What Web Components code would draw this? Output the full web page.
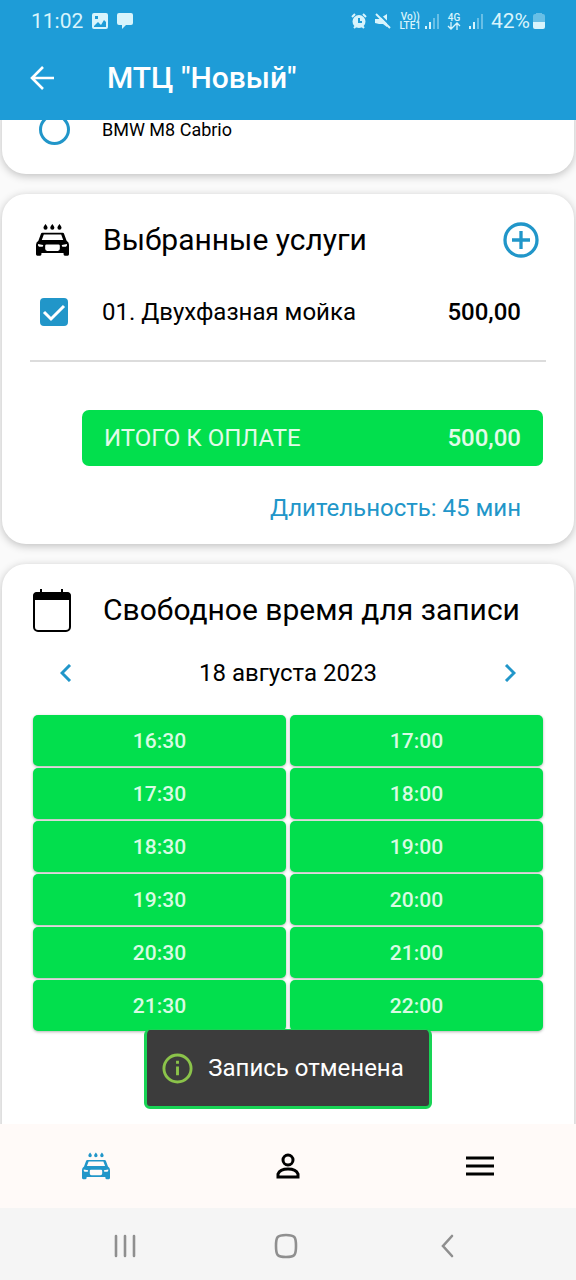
<!DOCTYPE html>
<html lang="ru">
<head>
<meta charset="utf-8">
<meta name="viewport" content="width=device-width, initial-scale=1">
<title>МТЦ "Новый"</title>
<style>
  html, body {
    margin: 0;
    height: 100%;
  }
  body {
    --blue: #1e9cd7;
    --accent: #2196c9;
    --green: #02df4d;
    font-family: Roboto, "Liberation Sans", sans-serif;
    font-size: 24px;
    color: #000;
    background: #fafafa;
  }
</style>
</head>
<body>
<booking-app>
  <status-bar slot="top" time="11:02" battery="42%"></status-bar>
  <title-bar slot="top">МТЦ "Новый"</title-bar>

  <app-card class="vehicles" scrolled>
    <option-row type="radio" small>BMW M8 Cabrio</option-row>
  </app-card>

  <app-card icon="car" heading="Выбранные услуги" action="Добавить услугу">
    <option-row type="checkbox" checked price="500,00">01. Двухфазная мойка</option-row>
    <order-total amount="500,00" duration="Длительность: 45 мин">ИТОГО К ОПЛАТЕ</order-total>
  </app-card>

  <app-card icon="calendar" heading="Свободное время для записи">
    <time-slots date="18 августа 2023"
      times="16:30 17:00 17:30 18:00 18:30 19:00 19:30 20:00 20:30 21:00 21:30 22:00"></time-slots>
  </app-card>

  <toast-message slot="toast">Запись отменена</toast-message>
  <tab-bar slot="bottom"></tab-bar>
  <system-nav slot="bottom"></system-nav>
</booking-app>

<script>
const ICONS = {
  car: ['0 0 97 94', `<g fill="currentColor">
    <path d="M28 0c4 5 6 8 6 11a6 6 0 0 1-12 0c0-3 2-6 6-11zM48 0c4 5 6 8 6 11a6 6 0 0 1-12 0c0-3 2-6 6-11zM69 0c4 5 6 8 6 11a6 6 0 0 1-12 0c0-3 2-6 6-11z"/>
    <path fill-rule="evenodd" d="M19 26h59q4 0 5 4l7 19q7 5 7 12v28q0 4-4 4h-8q-4 0-4-4v-4H16v4q0 4-4 4H4q-4 0-4-4V61q0-7 7-12l7-19q1-4 5-4zM23 31h51l6 16H17zM6 59l15 3q1 4-2 5H9q-4-2-3-8zM91 59l-15 3q-1 4 2 5h10q4-2 3-8zM31 60h35q4 0 4 4v9q0 6-6 6H33q-6 0-6-6v-9q0-4 4-4z"/></g>`],
  calendar: ['0 0 38 43', `<rect x="1" y="4" width="36" height="38" rx="4" fill="none" stroke="currentColor" stroke-width="2"/><path fill="currentColor" d="M0 11V7q0-4 4-4h3V0h2v3h19V0h2v3h4q4 0 4 4v4z"/>`],
  plus: ['0 0 36 36', `<g fill="none" stroke="currentColor" stroke-width="3.300"><circle cx="18" cy="18" r="16"/><path d="M18 9v18M9 18h18"/></g>`],
  back: ['0 0 24 24', `<path fill="none" stroke="currentColor" stroke-width="2.600" d="M13 1 2 12l11 11M2 12h22"/>`],
  left: ['0 0 12 18', `<path fill="none" stroke="currentColor" stroke-width="3" d="M10 1 2 9l8 8"/>`],
  right: ['0 0 12 18', `<path fill="none" stroke="currentColor" stroke-width="3" d="m2 1 8 8-8 8"/>`],
  check: ['0 0 28 28', `<path fill="none" stroke="currentColor" stroke-width="3" d="m4 14 7 7L24 8"/>`],
  info: ['0 0 32 32', `<g fill="none" stroke="currentColor" stroke-width="3"><circle cx="16" cy="16" r="14"/><path d="M16 14v9M16 8v3"/></g>`],
  person: ['0 0 24 26', `<g fill="none" stroke="currentColor" stroke-width="3"><circle cx="12" cy="7" r="5"/><path d="M2 24v-3q2-5 10-5t10 5v3z"/></g>`],
  menu: ['0 0 28 20', `<path fill="none" stroke="currentColor" stroke-width="3" d="M0 2h28M0 10h28M0 18h28"/>`],
  recents: ['0 0 22 24', `<path fill="none" stroke="currentColor" stroke-width="2.600" stroke-linecap="round" d="M2 2v20M11 2v20M20 2v20"/>`],
  home: ['0 0 26 26', `<path fill="none" stroke="currentColor" stroke-width="2.600" d="M13 2c9 0 10 2 10 11s-1 11-10 11S3 22 3 13 4 2 13 2z"/>`],
  sysback: ['0 0 14 24', `<path fill="none" stroke="currentColor" stroke-width="2.600" stroke-linecap="round" d="M12 2 3 12l9 10"/>`],
  photo: ['0 0 16 16', `<path fill="currentColor" fill-rule="evenodd" d="M2 0h12q2 0 2 2v12q0 2-2 2H2q-2 0-2-2V2q0-2 2-2zM2 13l4-4 3 3 3-5 2 2v5H2zM3 3h3v3H3z"/>`],
  chat: ['0 0 16 16', `<path fill="currentColor" d="M2 0h12q2 0 2 2v8q0 2-2 2H9l-4 4v-4H2q-2 0-2-2V2q0-2 2-2z"/>`],
  alarm: ['0 0 16 16', `<path fill="none" stroke="currentColor" stroke-width="2" d="M1 4l3-3M15 4l-3-3M3 15l2-2M13 15l-2-2"/><path fill="currentColor" fill-rule="evenodd" d="M8 2a6 6 0 1 1 0 13A6 6 0 0 1 8 2zM7 5v5h4V8H9V5z"/>`],
  mute: ['0 0 16 16', `<path fill="currentColor" d="M0 6h4l8-5v13l-4-3H4L0 10z"/><path stroke="#1e9cd7" stroke-width="2" d="M3 0l14 14"/><path stroke="currentColor" stroke-width="2" d="M1 1l14 14"/>`],
  signal: ['0 0 14 16', `<g fill="currentColor"><path d="M0 13h2v3H0zM4 9h2v7H4z"/><path opacity=".4" d="M8 5h2v11H8zM12 1h2v15h-2z"/></g>`],
  updown: ['0 0 14 8', `<path fill="none" stroke="currentColor" stroke-width="1.300" d="M4 0v7M1 4l3 3 3-3M10 8V1M7 4l3-3 3 3"/>`],
  battery: ['0 0 12 16', `<path fill="currentColor" opacity=".4" d="M3 0h6v1h1q2 0 2 2v6H0V3q0-2 2-2h1z"/><path fill="currentColor" d="M0 9h12v5q0 2-2 2H2q-2 0-2-2z"/>`]
};

const icon = (name, width, height) =>
  `<svg viewBox="${ICONS[name][0]}" width="${width}" height="${height}" aria-hidden="true">${ICONS[name][1]}</svg>`;

const BASE = `
  :host, * { box-sizing: border-box; }
  svg { display: block; flex: none; }
  button {
    display: grid;
    place-items: center;
    margin: 0;
    padding: 0;
    border: 0;
    background: none;
    color: inherit;
    font: inherit;
    cursor: pointer;
  }
`;

class BaseElement extends HTMLElement {
  constructor() {
    super();
    this.attachShadow({ mode: 'open' });
  }

  connectedCallback() {
    this.shadowRoot.innerHTML = `<style>${BASE}${this.styles()}</style>${this.markup()}`;
  }

  attr(name) {
    return this.getAttribute(name) || '';
  }
}

customElements.define('booking-app', class extends BaseElement {
  styles() {
    return `
      :host {
        display: flex;
        flex-direction: column;
        height: 100vh;
      }
      header { background: var(--blue); }
      .view {
        position: relative;
        flex: 1;
        min-height: 0;
        display: flex;
        flex-direction: column;
      }
      main {
        flex: 1;
        min-height: 0;
        overflow: hidden;
        display: flex;
        flex-direction: column;
        gap: 20px;
        padding: 0 2px;
      }
      /* the toast floats over the scrolled cards */
      .toast {
        position: absolute;
        left: 0;
        right: 0;
        bottom: 15px;
        display: flex;
        justify-content: center;
      }
    `;
  }

  markup() {
    return `
      <header><slot name="top"></slot></header>
      <div class="view">
        <main><slot></slot></main>
        <div class="toast"><slot name="toast"></slot></div>
      </div>
      <footer><slot name="bottom"></slot></footer>
    `;
  }
});

customElements.define('status-bar', class extends BaseElement {
  styles() {
    return `
      :host {
        display: flex;
        align-items: center;
        justify-content: space-between;
        height: 42px;
        padding: 0 31px;
        color: #d8f4fc;
        font-size: 21px;
      }
      div { display: flex; align-items: center; gap: 9px; }
      .right { gap: 8px; }
      .net {
        display: grid;
        justify-items: center;
        font-size: 10px;
        line-height: 9px;
        font-weight: 500;
      }
      .pair { gap: 4px; }
      .level { gap: 3px; }
    `;
  }

  markup() {
    return `
      <div><span>${this.attr('time')}</span>${icon('photo', 16, 16)}${icon('chat', 16, 16)}</div>
      <div class="right">
        ${icon('alarm', 16, 16)}${icon('mute', 16, 16)}
        <div class="pair"><span class="net"><span>Vo))</span><span>LTE1</span></span>${icon('signal', 14, 16)}</div>
        <div class="pair"><span class="net"><span>4G</span>${icon('updown', 14, 8)}</span></div>
        ${icon('signal', 14, 16)}
        <div class="level"><span>${this.attr('battery')}</span>${icon('battery', 12, 16)}</div>
      </div>
    `;
  }
});

customElements.define('title-bar', class extends BaseElement {
  styles() {
    return `
      :host {
        display: flex;
        align-items: center;
        gap: 43px;
        height: 78px;
        padding: 0 20px 6px;
        color: #fff;
      }
      button { width: 44px; height: 44px; }
      h1 {
        margin: 0;
        font-size: 30px;
        line-height: 36px;
        font-weight: 500;
      }
    `;
  }

  markup() {
    return `<button aria-label="Назад">${icon('back', 24, 24)}</button><h1><slot></slot></h1>`;
  }
});

customElements.define('app-card', class extends BaseElement {
  styles() {
    return `
      :host {
        display: block;
        flex: none;
        padding: 0 28px;
        border-radius: 24px;
        background: #fff;
        box-shadow: 0 2px 8px rgba(0, 0, 0, .24);
      }
      /* partly scrolled under the title bar */
      :host([scrolled]) {
        margin-top: -24px;
        padding-top: 7px;
        padding-bottom: 19px;
      }
      .head {
        display: grid;
        grid-template-columns: 44px 1fr auto;
        align-items: center;
        column-gap: 29px;
        height: 92px;
      }
      .head > svg { justify-self: center; }
      h2 {
        margin: 0;
        font-size: 30px;
        line-height: 36px;
        font-weight: 400;
        white-space: nowrap;
      }
      button { width: 50px; height: 50px; color: var(--accent); }
    `;
  }

  markup() {
    if (!this.hasAttribute('heading')) return '<slot></slot>';
    const lead = this.attr('icon') === 'car' ? icon('car', 33, 32) : icon('calendar', 38, 43);
    const action = this.attr('action');
    return `
      <div class="head">
        ${lead}
        <h2>${this.attr('heading')}</h2>
        ${action ? `<button aria-label="${action}">${icon('plus', 36, 36)}</button>` : ''}
      </div>
      <slot></slot>
    `;
  }
});

customElements.define('option-row', class extends BaseElement {
  styles() {
    return `
      :host { display: block; }
      :host([small]) { font-size: 18px; }
      label {
        display: grid;
        grid-template-columns: 48px 1fr auto;
        align-items: center;
        column-gap: 24px;
        height: 52px;
        padding-right: 25px;
      }
      .mark { display: grid; place-items: center; }
      .mark > * { grid-area: 1 / 1; }
      input {
        appearance: none;
        margin: 0;
        border: 3px solid var(--accent);
      }
      input[type=radio] { width: 31px; height: 31px; border-radius: 50%; }
      input[type=checkbox] { width: 28px; height: 28px; border-radius: 4px; }
      input:checked { background: var(--accent); }
      .mark svg { color: #fff; pointer-events: none; }
      input:not(:checked) + svg { visibility: hidden; }
      .price { font-weight: 500; }
    `;
  }

  markup() {
    const type = this.attr('type');
    return `
      <label>
        <span class="mark">
          <input type="${type}" ${this.hasAttribute('checked') ? 'checked' : ''}>
          ${type === 'checkbox' ? icon('check', 28, 28) : ''}
        </span>
        <span><slot></slot></span>
        <span class="price">${this.attr('price')}</span>
      </label>
    `;
  }
});

customElements.define('order-total', class extends BaseElement {
  styles() {
    return `
      :host { display: block; }
      hr {
        margin: 22px 0 48px;
        border: 0;
        border-top: 2px solid #dcdcdc;
      }
      .total {
        display: flex;
        align-items: center;
        justify-content: space-between;
        height: 56px;
        margin: 0 3px 0 52px;
        padding: 0 22px;
        border-radius: 7px;
        background: var(--green);
        color: #e2fbe9;
      }
      strong { font-weight: 500; }
      p {
        margin: 0;
        padding: 26px 25px 20px;
        line-height: 32px;
        text-align: right;
        color: var(--accent);
      }
    `;
  }

  markup() {
    return `
      <hr>
      <div class="total"><span><slot></slot></span><strong>${this.attr('amount')}</strong></div>
      <p>${this.attr('duration')}</p>
    `;
  }
});

customElements.define('time-slots', class extends BaseElement {
  styles() {
    return `
      :host { display: block; padding-bottom: 120px; }
      .date {
        display: flex;
        align-items: center;
        justify-content: space-between;
        height: 34px;
        padding: 0 20px;
      }
      .date button { width: 32px; height: 32px; color: var(--accent); }
      .slots {
        display: grid;
        grid-template-columns: 1fr 1fr;
        gap: 2px 4px;
        margin: 25px 3px 0;
      }
      .slots button {
        height: 51px;
        border-radius: 5px;
        background: var(--green);
        box-shadow: 0 1px 3px rgba(0, 0, 0, .3);
        color: #d9fbe3;
        font-size: 21px;
        font-weight: 500;
      }
    `;
  }

  markup() {
    const slots = this.attr('times').split(' ').map(time => `<button>${time}</button>`).join('');
    return `
      <div class="date">
        <button aria-label="Предыдущий день">${icon('left', 12, 18)}</button>
        <span>${this.attr('date')}</span>
        <button aria-label="Следующий день">${icon('right', 12, 18)}</button>
      </div>
      <div class="slots">${slots}</div>
    `;
  }
});

customElements.define('toast-message', class extends BaseElement {
  styles() {
    return `
      :host {
        display: flex;
        align-items: center;
        gap: 15px;
        height: 80px;
        padding: 0 25px 0 15px;
        border: 3px solid #18d455;
        border-top-width: 1px;
        border-radius: 6px;
        background: #3c3c3c;
        color: #fff;
      }
      svg { color: #8bc34a; }
    `;
  }

  markup() {
    return `${icon('info', 31, 31)}<span role="status"><slot></slot></span>`;
  }
});

customElements.define('tab-bar', class extends BaseElement {
  styles() {
    return `
      nav {
        display: grid;
        grid-template-columns: repeat(3, 1fr);
        height: 84px;
        background: #fffaf8;
      }
      a { display: grid; place-items: center; color: #000; }
      a[aria-current] { color: var(--accent); }
    `;
  }

  markup() {
    return `
      <nav>
        <a href="#wash" aria-label="Мойка" aria-current="page">${icon('car', 28, 28)}</a>
        <a href="#profile" aria-label="Профиль">${icon('person', 24, 26)}</a>
        <a href="#menu" aria-label="Меню">${icon('menu', 28, 20)}</a>
      </nav>
    `;
  }
});

customElements.define('system-nav', class extends BaseElement {
  styles() {
    return `
      :host {
        display: grid;
        grid-template-columns: repeat(3, 1fr);
        height: 72px;
        padding: 4px 48px 0 44px;
        background: #f5f5f5;
        color: #8f8f8f;
      }
    `;
  }

  markup() {
    return `
      <button aria-label="Недавние">${icon('recents', 22, 24)}</button>
      <button aria-label="Главный экран">${icon('home', 26, 26)}</button>
      <button aria-label="Назад">${icon('sysback', 14, 24)}</button>
    `;
  }
});
</script>
</body>
</html>
